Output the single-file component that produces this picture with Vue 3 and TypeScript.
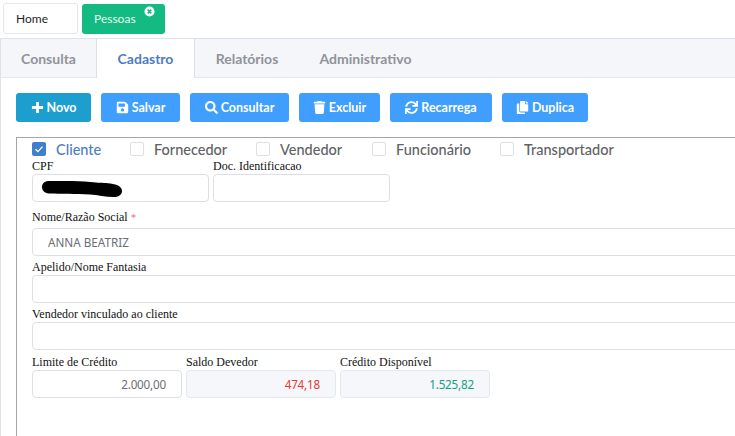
<script setup lang="ts">
const buttons = [
  { label: 'Novo', w: 75, vb: '0 0 448 448', d: 'M176 32h96v144h144v96H272v144h-96V272H32v-96h144z', cls: 'info' },
  { label: 'Salvar', w: 79, vb: '0 0 448 512', d: 'M433.941 129.941l-83.882-83.882A48 48 0 0 0 316.118 32H48C21.49 32 0 53.49 0 80v352c0 26.51 21.49 48 48 48h352c26.51 0 48-21.49 48-48V163.882a48 48 0 0 0-14.059-33.941zM224 416c-35.346 0-64-28.654-64-64 0-35.346 28.654-64 64-64s64 28.654 64 64c0 35.346-28.654 64-64 64zm96-304.52V212c0 6.627-5.373 12-12 12H76c-6.627 0-12-5.373-12-12V108c0-6.627 5.373-12 12-12h228.52c3.183 0 6.235 1.264 8.485 3.515l3.48 3.48A11.996 11.996 0 0 1 320 111.48z', cls: '' },
  { label: 'Consultar', w: 99, vb: '0 0 512 512', d: 'M505 442.7L405.3 343c-4.5-4.5-10.6-7-17-7H372c27.6-35.3 44-79.7 44-128C416 93.1 322.9 0 208 0S0 93.1 0 208s93.1 208 208 208c48.3 0 92.7-16.4 128-44v16.3c0 6.4 2.5 12.5 7 17l99.7 99.7c9.4 9.4 24.6 9.4 33.9 0l28.3-28.3c9.4-9.4 9.4-24.6.1-34zM208 336c-70.7 0-128-57.2-128-128 0-70.7 57.2-128 128-128 70.7 0 128 57.2 128 128 0 70.7-57.2 128-128 128z', cls: '' },
  { label: 'Excluir', w: 81, vb: '0 0 448 512', d: 'M432 32H312l-9.4-18.7A24 24 0 0 0 281.1 0H166.8a23.72 23.72 0 0 0-21.4 13.3L136 32H16A16 16 0 0 0 0 48v32a16 16 0 0 0 16 16h416a16 16 0 0 0 16-16V48a16 16 0 0 0-16-16zM53.2 467a48 48 0 0 0 47.9 45h245.8a48 48 0 0 0 47.9-45L416 128H32z', cls: '' },
  { label: 'Recarrega', w: 102, vb: '0 0 512 512', d: 'M440.65 12.57l4 82.77A247.16 247.16 0 0 0 255.83 8C134.73 8 33.91 94.92 12.29 209.82A12 12 0 0 0 24.09 224h49.05a12 12 0 0 0 11.67-9.26 175.91 175.91 0 0 1 317-56.94l-101.46-4.86a12 12 0 0 0-12.57 12v47.41a12 12 0 0 0 12 12H500a12 12 0 0 0 12-12V12a12 12 0 0 0-12-12h-47.37a12 12 0 0 0-11.98 12.57zM255.83 432a175.61 175.61 0 0 1-146-77.8l101.8 4.87a12 12 0 0 0 12.57-12v-47.4a12 12 0 0 0-12-12H12a12 12 0 0 0-12 12V500a12 12 0 0 0 12 12h47.35a12 12 0 0 0 12-12.6l-4.15-82.57A247.17 247.17 0 0 0 255.83 504c121.11 0 221.93-86.92 243.55-201.82a12 12 0 0 0-11.8-14.18h-49.05a12 12 0 0 0-11.67 9.26A175.86 175.86 0 0 1 255.83 432z', cls: '' },
  { label: 'Duplica', w: 86, vb: '0 0 448 512', d: 'M320 448v40c0 13.255-10.745 24-24 24H24c-13.255 0-24-10.745-24-24V120c0-13.255 10.745-24 24-24h72v296c0 30.879 25.121 56 56 56h168zm0-344V0H152c-13.255 0-24 10.745-24 24v368c0 13.255 10.745 24 24 24h272c13.255 0 24-10.745 24-24V128H344c-13.2 0-24-10.8-24-24zm120.971-31.029L375.029 7.029A24 24 0 0 0 358.059 0H352v96h96v-6.059a24 24 0 0 0-7.029-16.97z', cls: '' },
]
const tabs = [
  { label: 'Consulta', w: 95, active: false },
  { label: 'Cadastro', w: 99, active: true },
  { label: 'Relatórios', w: 104, active: false },
  { label: 'Administrativo', w: 133, active: false },
]
const checks = [
  { label: 'Cliente', w: 98, on: true },
  { label: 'Fornecedor', w: 126, on: false },
  { label: 'Vendedor', w: 116, on: false },
  { label: 'Funcionário', w: 128, on: false },
  { label: 'Transportador', w: 130, on: false },
]
const money = [
  { label: 'Limite de Crédito', value: '2.000,00', cls: '' },
  { label: 'Saldo Devedor', value: '474,18', cls: 'off red' },
  { label: 'Crédito Disponível', value: '1.525,82', cls: 'off green' },
]
</script>

<template>
  <div class="page">
    <div class="tags">
      <div class="tag home">Home</div>
      <div class="tag pessoas">
        Pessoas
        <svg class="close" viewBox="0 0 12 12" width="11" height="11">
          <circle cx="6" cy="6" r="5.5" fill="#fff" />
          <path d="M4 4l4 4M8 4l-4 4" stroke="#13ba82" stroke-width="1.7" />
        </svg>
      </div>
    </div>
    <div class="panel">
      <div class="tabs">
        <div
          v-for="t in tabs"
          :key="t.label"
          class="tab"
          :class="{ active: t.active }"
          :style="{ width: t.w + 'px' }"
        >{{ t.label }}</div>
      </div>
      <div class="body">
        <div class="actions">
          <button
            v-for="b in buttons"
            :key="b.label"
            class="btn"
            :class="b.cls"
            :style="{ width: b.w + 'px' }"
          >
            <svg :viewBox="b.vb" width="13" height="13" fill="#fff"><path :d="b.d" /></svg>
            {{ b.label }}
          </button>
        </div>
        <div class="frame">
          <div class="checks">
            <label
              v-for="c in checks"
              :key="c.label"
              class="check"
              :class="{ on: c.on }"
              :style="{ width: c.w + 'px' }"
            >
              <span class="box">
                <svg v-if="c.on" viewBox="0 0 14 14" width="14" height="14">
                  <path d="M3.5 7.2l2.4 2.4 4.6-5" fill="none" stroke="#fff" stroke-width="1.3" />
                </svg>
              </span>
              {{ c.label }}
            </label>
          </div>

          <div class="row docs">
            <div class="field half">
              <div class="lbl">CPF</div>
              <div class="inp">
                <svg class="scribble" viewBox="0 0 80 16" width="80" height="16">
                  <path d="M6 0C20 -.5 40 0 54 1.500c6 .5 10 0 17 1.500 6 1 9 4 9 7 0 4-4 6-8 6-9 0-16-2-24-2.500C34 13 18 13 7 12.500 2 12 0 9 0 6 0 3 2 .5 6 0z" fill="#000" />
                </svg>
              </div>
            </div>
            <div class="field half">
              <div class="lbl">Doc. Identificacao</div>
              <div class="inp"></div>
            </div>
          </div>

          <div class="field wide nome">
            <div class="lbl">Nome/Razão Social <span class="req">*</span></div>
            <div class="inp text">ANNA BEATRIZ</div>
          </div>
          <div class="field wide apelido">
            <div class="lbl">Apelido/Nome Fantasia</div>
            <div class="inp"></div>
          </div>
          <div class="field wide apelido">
            <div class="lbl">Vendedor vinculado ao cliente</div>
            <div class="inp"></div>
          </div>

          <div class="row moneys">
            <div v-for="m in money" :key="m.label" class="field third">
              <div class="lbl">{{ m.label }}</div>
              <div class="inp num" :class="m.cls">{{ m.value }}</div>
            </div>
          </div>
        </div>
      </div>
    </div>
  </div>
</template>

<style scoped>
.page {
  width: 735px;
  height: 436px;
  overflow: hidden;
  background: #fff;
  box-sizing: border-box;
  font-family: Lato, "Noto Sans", sans-serif;
}
.tags {
  display: flex;
  align-items: flex-end;
  gap: 4px;
  height: 34px;
  padding: 0 0 0 3px;
  margin-bottom: 4px;
}
.tag {
  box-sizing: border-box;
  font-size: 12px;
  border-radius: 3px;
  position: relative;
  display: flex;
  align-items: center;
}
.home {
  width: 75px;
  height: 31px;
  padding-left: 12px;
  border: 1px solid #e4e7ed;
  color: #1f1f1f;
}
.pessoas {
  width: 83px;
  height: 30px;
  padding-left: 12px;
  background: #13ba82;
  color: #e8f8f2;
  padding-bottom: 1px;
}
.close {
  position: absolute;
  top: 2px;
  right: 10px;
}
.panel {
  border-top: 1px solid #dfe1ea;
  border-left: 1px solid #dfe1ea;
  height: 398px;
  box-sizing: border-box;
}
.tabs {
  display: flex;
  height: 39px;
  background: #f5f6fa;
  border-bottom: 1px solid #e4e7ed;
  box-sizing: border-box;
}
.tab {
  box-sizing: border-box;
  flex: none;
  display: flex;
  align-items: center;
  justify-content: center;
  font-size: 14px;
  font-weight: 700;
  color: #909399;
  height: 39px;
}
.tab.active {
  background: #fff;
  color: #4d7cbf;
  border-left: 1px solid #dcdfe6;
  border-right: 1px solid #dcdfe6;
}
.body {
  padding: 15px 0 0 15px;
}
.actions {
  display: flex;
  gap: 10px;
  margin-bottom: 15px;
}
.btn {
  box-sizing: border-box;
  height: 29px;
  flex: none;
  display: flex;
  align-items: center;
  justify-content: center;
  gap: 3px;
  border: none;
  padding: 0;
  border-radius: 3px;
  background: #409eff;
  color: #fff;
  font-family: inherit;
  font-size: 12.500px;
  font-weight: 700;
}
.btn.info {
  background: #1c9fcf;
}
.frame {
  box-sizing: border-box;
  width: 760px;
  height: 300px;
  border-top: 1px solid #a6a6a6;
  border-left: 1px solid #a6a6a6;
  padding: 3px 0 0 15px;
}
.checks {
  display: flex;
  height: 16px;
}
.check {
  flex: none;
  display: flex;
  align-items: center;
  gap: 10px;
  font-size: 14.500px;
  font-weight: 500;
  color: #606266;
}
.check.on {
  color: #4d7cbf;
}
.box {
  box-sizing: border-box;
  width: 14px;
  height: 14px;
  border: 1px solid #dcdfe6;
  border-radius: 2px;
  display: block;
}
.check.on .box {
  background: #3f7fcc;
  border: none;
}
.row {
  display: flex;
  gap: 4px;
}
.docs {
  margin-top: 2px;
}
.docs .lbl {
  margin-bottom: 1px;
}
.lbl {
  font-family: "Liberation Serif", serif;
  font-size: 12px;
  line-height: 14px;
  color: #111;
}
.req {
  color: #f56c6c;
  font-size: 11px;
}
.field {
  flex: none;
}
.half {
  width: 177px;
}
.third {
  width: 150px;
}
.wide {
  width: 720px;
}
.inp {
  box-sizing: border-box;
  height: 28px;
  border: 1px solid #dcdfe6;
  border-radius: 4px;
  position: relative;
  font-family: "Noto Sans", sans-serif;
  font-size: 11.700px;
  line-height: 26px;
  color: #6b6e76;
}
.text {
  padding-left: 15px;
}
.num {
  text-align: right;
  padding-right: 15px;
  letter-spacing: -0.2px;
}
.off {
  background: #f5f7fa;
  border-color: #e4e7ed;
}
.red {
  color: #e53935;
}
.green {
  color: #13a085;
}
.scribble {
  position: absolute;
  left: 9px;
  top: 6px;
}
.nome {
  margin-top: 8px;
}
.nome .lbl {
  margin-bottom: 4px;
}
.apelido {
  margin-top: 4px;
}
.apelido .lbl {
  margin-bottom: 1px;
}
.moneys {
  margin-top: 5px;
}
.moneys .lbl {
  margin-bottom: 1px;
}
</style>
